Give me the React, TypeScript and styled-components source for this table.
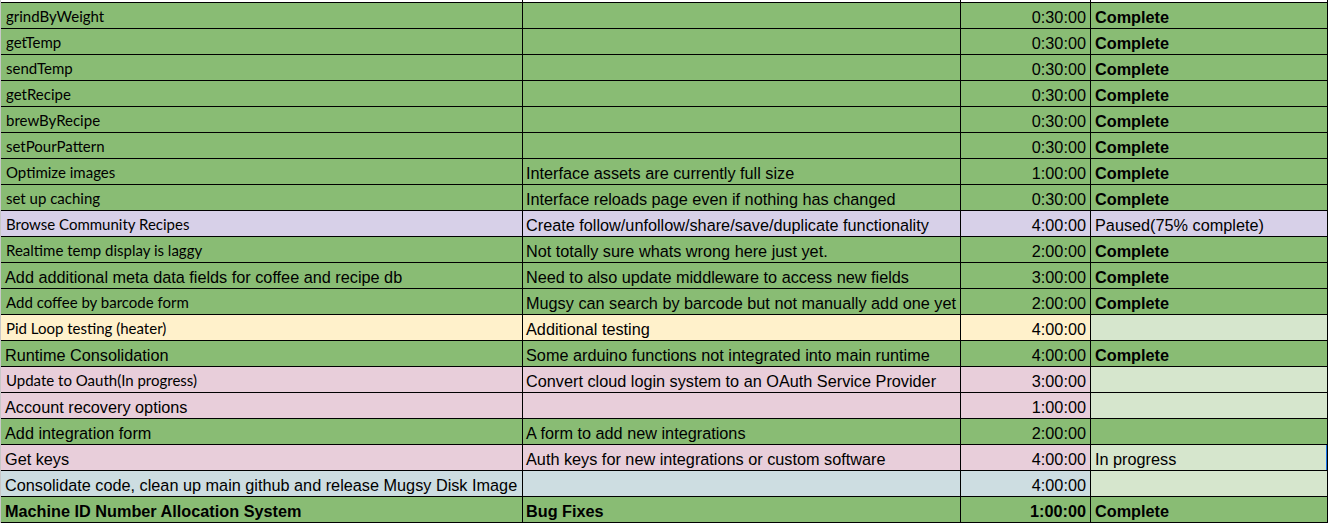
import React from "react";
import styled, { createGlobalStyle } from "styled-components";

const GlobalStyle = createGlobalStyle`
  html, body {
    margin: 0;
    padding: 0;
    background: #ffffff;
  }
  body {
    font-family: "Liberation Sans", Arial, sans-serif;
    color: #000;
  }
`;

const C = {
  green: "#89bc74",
  pale: "#d6e6cd",
  purple: "#d7d0e8",
  yellow: "#fff1cb",
  pink: "#e8ceda",
  blue: "#cddde1",
  white: "#ffffff",
};

type Face = "calibri" | "arial";

const Sheet = styled.div`
  display: grid;
  grid-template-columns: 522px 438px 130px 237px;
  grid-template-rows: 3px;
  grid-auto-rows: 26px;
  width: 1327px;
  border-left: 1px solid #c8c8c8;
`;

const Stub = styled.div`
  height: 2px;
  border-right: 1px solid #000;
  border-bottom: 1px solid #000;
  background: #fff;
`;

const Cell = styled.div<{
  $bg: string;
  $align?: "left" | "right";
  $bold?: boolean;
  $face?: Face;
  $pl?: number;
  $pr?: number;
}>`
  position: relative;
  box-sizing: border-box;
  display: flex;
  align-items: flex-end;
  justify-content: ${(p) => (p.$align === "right" ? "flex-end" : "flex-start")};
  background: ${(p) => p.$bg};
  border-right: 1px solid #000;
  border-bottom: 1px solid #000;
  padding: 0 ${(p) => p.$pr ?? 4}px ${(p) => (p.$face === "calibri" ? 3 : 2)}px
    ${(p) => p.$pl ?? 4}px;
  font-family: ${(p) =>
    p.$face === "calibri"
      ? `Lato, "Open Sans", sans-serif`
      : `"Liberation Sans", Arial, sans-serif`};
  font-size: ${(p) => (p.$face === "calibri" ? 15 : 16.25)}px;
  line-height: 18px;
  font-weight: ${(p) => (p.$bold ? 700 : 400)};
  white-space: nowrap;
  overflow: hidden;
`;

const Marker = styled.span`
  position: absolute;
  right: -1px;
  top: 0;
  bottom: 0;
  width: 2px;
  background: #1a73e8;
`;

type Row = {
  task: string;
  face: Face;
  note: string;
  time: string;
  status: string;
  statusBold?: boolean;
  bg: string;
  statusBg: string;
  allBold?: boolean;
  marker?: boolean;
};

const rows: Row[] = [
  { task: "grindByWeight", face: "calibri", note: "", time: "0:30:00", status: "Complete", statusBold: true, bg: C.green, statusBg: C.green },
  { task: "getTemp", face: "calibri", note: "", time: "0:30:00", status: "Complete", statusBold: true, bg: C.green, statusBg: C.green },
  { task: "sendTemp", face: "calibri", note: "", time: "0:30:00", status: "Complete", statusBold: true, bg: C.green, statusBg: C.green },
  { task: "getRecipe", face: "calibri", note: "", time: "0:30:00", status: "Complete", statusBold: true, bg: C.green, statusBg: C.green },
  { task: "brewByRecipe", face: "calibri", note: "", time: "0:30:00", status: "Complete", statusBold: true, bg: C.green, statusBg: C.green },
  { task: "setPourPattern", face: "calibri", note: "", time: "0:30:00", status: "Complete", statusBold: true, bg: C.green, statusBg: C.green },
  { task: "Optimize images", face: "calibri", note: "Interface assets are currently full size", time: "1:00:00", status: "Complete", statusBold: true, bg: C.green, statusBg: C.green },
  { task: "set up caching", face: "calibri", note: "Interface reloads page even if nothing has changed", time: "0:30:00", status: "Complete", statusBold: true, bg: C.green, statusBg: C.green },
  { task: "Browse Community Recipes", face: "calibri", note: "Create follow/unfollow/share/save/duplicate functionality", time: "4:00:00", status: "Paused(75% complete)", bg: C.purple, statusBg: C.purple },
  { task: "Realtime temp display is laggy", face: "calibri", note: "Not totally sure whats wrong here just yet.", time: "2:00:00", status: "Complete", statusBold: true, bg: C.green, statusBg: C.green },
  { task: "Add additional meta data fields for coffee and recipe db", face: "arial", note: "Need to also update middleware to access new fields", time: "3:00:00", status: "Complete", statusBold: true, bg: C.green, statusBg: C.green },
  { task: "Add coffee by barcode form", face: "calibri", note: "Mugsy can search by barcode but not manually add one yet", time: "2:00:00", status: "Complete", statusBold: true, bg: C.green, statusBg: C.green },
  { task: "Pid Loop testing (heater)", face: "calibri", note: "Additional testing", time: "4:00:00", status: "", bg: C.yellow, statusBg: C.pale },
  { task: "Runtime Consolidation", face: "arial", note: "Some arduino functions not integrated into main runtime", time: "4:00:00", status: "Complete", statusBold: true, bg: C.green, statusBg: C.green },
  { task: "Update to Oauth(In progress)", face: "calibri", note: "Convert cloud login system to an OAuth Service Provider", time: "3:00:00", status: "", bg: C.pink, statusBg: C.pale },
  { task: "Account recovery options", face: "arial", note: "", time: "1:00:00", status: "", bg: C.pink, statusBg: C.pale },
  { task: "Add integration form", face: "arial", note: "A form to add new integrations", time: "2:00:00", status: "", bg: C.green, statusBg: C.green },
  { task: "Get keys", face: "arial", note: "Auth keys for new integrations or custom software", time: "4:00:00", status: "In progress", bg: C.pink, statusBg: C.pale, marker: true },
  { task: "Consolidate code, clean up main github and release Mugsy Disk Image", face: "arial", note: "", time: "4:00:00", status: "", bg: C.blue, statusBg: C.pale },
  { task: "Machine ID Number Allocation System", face: "arial", note: "Bug Fixes", time: "1:00:00", status: "Complete", statusBold: true, bg: C.green, statusBg: C.green, allBold: true },
];

export default function App() {
  return (
    <>
      <GlobalStyle />
      <Sheet>
        <Stub />
        <Stub />
        <Stub />
        <Stub />
        {rows.map((r, i) => (
          <React.Fragment key={i}>
            <Cell $bg={r.bg} $face={r.face} $bold={r.allBold} $pl={r.face === "calibri" ? 5 : 4}>
              {r.task}
            </Cell>
            <Cell $bg={r.bg} $bold={r.allBold} $pl={3}>
              {r.note}
            </Cell>
            <Cell $bg={r.bg} $align="right" $bold={r.allBold} $pr={4}>
              {r.time}
            </Cell>
            <Cell $bg={r.statusBg} $bold={r.statusBold || r.allBold}>
              {r.status}
              {r.marker && <Marker />}
            </Cell>
          </React.Fragment>
        ))}
      </Sheet>
    </>
  );
}
